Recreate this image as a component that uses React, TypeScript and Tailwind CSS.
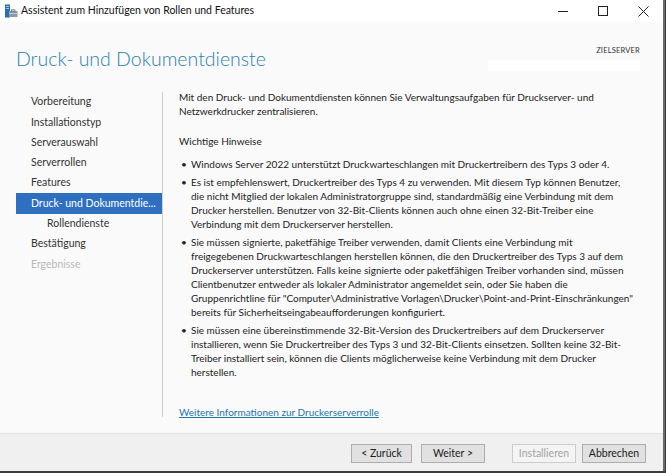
import React from "react";

const navItems = [
  { label: "Vorbereitung" },
  { label: "Installationstyp" },
  { label: "Serverauswahl" },
  { label: "Serverrollen" },
  { label: "Features" },
  { label: "Druck- und Dokumentdie...", active: true },
  { label: "Rollendienste", sub: true },
  { label: "Bestätigung" },
  { label: "Ergebnisse", disabled: true },
];

const bullets = [
  "Windows Server 2022 unterstützt Druckwarteschlangen mit Druckertreibern des Typs 3 oder 4.",
  "Es ist empfehlenswert, Druckertreiber des Typs 4 zu verwenden. Mit diesem Typ können Benutzer, die nicht Mitglied der lokalen Administratorgruppe sind, standardmäßig eine Verbindung mit dem Drucker herstellen. Benutzer von 32-Bit-Clients können auch ohne einen 32-Bit-Treiber eine Verbindung mit dem Druckerserver herstellen.",
  "Sie müssen signierte, paketfähige Treiber verwenden, damit Clients eine Verbindung mit freigegebenen Druckwarteschlangen herstellen können, die den Druckertreiber des Typs 3 auf dem Druckerserver unterstützen. Falls keine signierte oder paketfähigen Treiber vorhanden sind, müssen Clientbenutzer entweder als lokaler Administrator angemeldet sein, oder Sie haben die Gruppenrichtline für \"Computer\\Administrative Vorlagen\\Drucker\\Point-and-Print-Einschränkungen\" bereits für Sicherheitseingabeaufforderungen konfiguriert.",
  "Sie müssen eine übereinstimmende 32-Bit-Version des Druckertreibers auf dem Druckerserver installieren, wenn Sie Druckertreiber des Typs 3 und 32-Bit-Clients einsetzen. Sollten keine 32-Bit-Treiber installiert sein, können die Clients möglicherweise keine Verbindung mit dem Drucker herstellen.",
];

function AppIcon() {
  return (
    <svg width="14" height="14" viewBox="0 0 14 14">
      <rect x="1" y="0.5" width="5" height="13" fill="#2d6db5" />
      <rect x="2" y="2" width="3" height="1" fill="#9cc3ec" />
      <rect x="2" y="4" width="3" height="1" fill="#9cc3ec" />
      <rect x="5" y="7" width="8.5" height="6" fill="#8a9aa8" />
      <rect x="7.5" y="5.8" width="3.5" height="1.4" fill="none" stroke="#6a7885" strokeWidth="0.8" />
      <rect x="5" y="9" width="8.5" height="0.8" fill="#c9d4de" />
    </svg>
  );
}

function WinButton({ label, disabled, className }: { label: string; disabled?: boolean; className: string }) {
  return (
    <button
      className={`h-[19px] border text-[10.5px] leading-none ${className} ${
        disabled
          ? "border-[#cccccc] bg-[#f4f4f4] text-[#a3a3a3]"
          : "border-[#adadad] bg-[#e1e1e1] text-[#1a1a1a]"
      }`}
    >
      {label}
    </button>
  );
}

export default function App() {
  return (
    <div className="w-[666px] h-[473px] overflow-hidden bg-[#3c3c3c] font-['Lato','Noto_Sans',sans-serif] text-[#1e1e1e]">
      <div className="flex h-[471px] w-[665px] flex-col border-r-2 border-[#6a6a6a] bg-[#fafafa]">
        {/* Title bar */}
        <div className="flex h-[22px] shrink-0 items-center bg-white">
          <div className="ml-[4px] flex items-center">
            <AppIcon />
          </div>
          <span className="ml-[3px] text-[10.5px] text-[#111]">Assistent zum Hinzufügen von Rollen und Features</span>
          <div className="ml-auto flex h-full">
            <div className="flex w-[40px] items-center justify-center">
              <div className="h-px w-[10px] bg-[#222]" />
            </div>
            <div className="flex w-[40px] items-center justify-center">
              <div className="h-[10px] w-[10px] border border-[#222]" />
            </div>
            <div className="flex w-[40px] items-center justify-center">
              <svg width="11" height="11" viewBox="0 0 11 11">
                <path d="M0.5 0.5 L10.5 10.5 M10.5 0.5 L0.5 10.5" stroke="#222" strokeWidth="1" />
              </svg>
            </div>
          </div>
        </div>

        {/* Header */}
        <div className="flex h-[67px] shrink-0 items-start justify-between pl-[16px] pr-[23px]">
          <h1 className="mt-[27px] text-[19.5px] font-light leading-none text-[#2a82ad]">Druck- und Dokumentdienste</h1>
          <div className="mt-[25px] flex flex-col items-end">
            <span className="text-[7.5px] leading-none tracking-[0.2px] text-[#333]">ZIELSERVER</span>
            <div className="mt-[5px] h-[11px] w-[152px] bg-white" />
          </div>
        </div>

        {/* Main */}
        <div className="flex min-h-0 flex-1">
          <nav className="flex w-[163px] shrink-0 flex-col pt-[3px] pb-[16px]">
            <div className="flex h-full flex-col border-r border-[#cfcfcf]">
              {navItems.map((it) => (
                <div
                  key={it.label}
                  className={`ml-[16px] flex h-[20.3px] shrink-0 items-center text-[10.5px] ${
                    it.active ? "bg-[#2f6fbf] text-white" : it.disabled ? "text-[#b9b9b9]" : "text-[#333]"
                  } ${it.sub ? "pl-[31px]" : "pl-[15px]"}`}
                >
                  {it.label}
                </div>
              ))}
            </div>
          </nav>

          <main className="flex min-w-0 flex-1 flex-col pl-[16px] pr-[29px] pt-[1px] text-[10px] leading-[14px] text-[#222]">
            <p className="pr-[30px]">
              Mit den Druck- und Dokumentdiensten können Sie Verwaltungsaufgaben für Druckserver- und
              Netzwerkdrucker zentralisieren.
            </p>
            <p className="mt-[16px]">Wichtige Hinweise</p>
            <ul className="mt-[9px] flex flex-col gap-[4px]">
              {bullets.map((b, i) => (
                <li key={i} className="flex">
                  <span className="w-[12px] shrink-0 pl-[2px]">•</span>
                  <span>{b}</span>
                </li>
              ))}
            </ul>
            <a className="mt-[26px] w-fit text-[#1f77a9] underline">Weitere Informationen zur Druckerserverrolle</a>
          </main>
        </div>

        {/* Footer */}
        <div className="flex h-[38px] shrink-0 items-start justify-end border-t border-[#e2e2e2] bg-[#f0f0f0] pt-[10px] pr-[17px]">
          <WinButton label="< Zurück" className="w-[61px]" />
          <WinButton label="Weiter >" className="ml-[9px] w-[64px]" />
          <WinButton label="Installieren" className="ml-[27px] w-[64px]" disabled />
          <WinButton label="Abbrechen" className="ml-[6px] w-[64px]" />
        </div>
      </div>
    </div>
  );
}
